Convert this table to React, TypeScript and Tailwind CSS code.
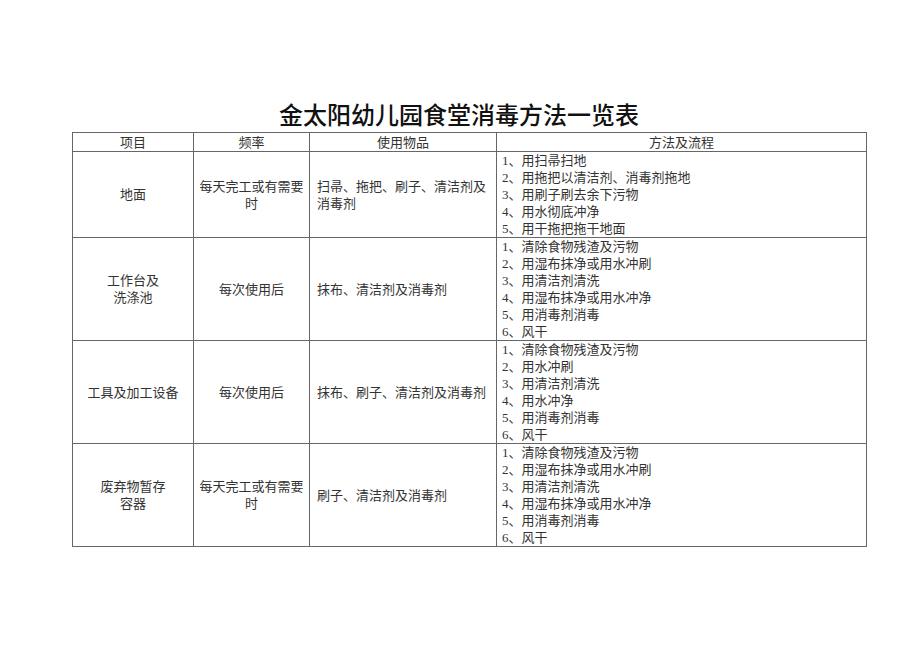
const rows = [
  {
    item: ['地面'],
    freq: '每天完工或有需要时',
    supplies: '扫帚、拖把、刷子、清洁剂及消毒剂',
    steps: ['1、用扫帚扫地', '2、用拖把以清洁剂、消毒剂拖地', '3、用刷子刷去余下污物', '4、用水彻底冲净', '5、用干拖把拖干地面'],
    height: 'h-[84px]',
  },
  {
    item: ['工作台及', '洗涤池'],
    freq: '每次使用后',
    supplies: '抹布、清洁剂及消毒剂',
    steps: ['1、清除食物残渣及污物', '2、用湿布抹净或用水冲刷', '3、用清洁剂清洗', '4、用湿布抹净或用水冲净', '5、用消毒剂消毒', '6、风干'],
    height: 'h-[103px]',
  },
  {
    item: ['工具及加工设备'],
    freq: '每次使用后',
    supplies: '抹布、刷子、清洁剂及消毒剂',
    steps: ['1、清除食物残渣及污物', '2、用水冲刷', '3、用清洁剂清洗', '4、用水冲净', '5、用消毒剂消毒', '6、风干'],
    height: 'h-[101px]',
  },
  {
    item: ['废弃物暂存', '容器'],
    freq: '每天完工或有需要时',
    supplies: '刷子、清洁剂及消毒剂',
    steps: ['1、清除食物残渣及污物', '2、用湿布抹净或用水冲刷', '3、用清洁剂清洗', '4、用湿布抹净或用水冲净', '5、用消毒剂消毒', '6、风干'],
    height: 'h-[101px]',
  },
];

const serif = "[font-family:'Liberation_Serif','Noto_Sans_CJK_SC',serif]";

export default function App() {
  return (
    <div className={`w-[920px] h-[651px] bg-white text-[#333] ${serif}`}>
      <div className="pt-[97px]">
        <h1 className="text-center text-[24px] leading-[34px] font-medium text-[#111] [font-family:'Noto_Sans_CJK_SC',sans-serif] pr-[2px]">
          金太阳幼儿园食堂消毒方法一览表
        </h1>
        <table className="ml-[72px] mt-px w-[794px] border-collapse table-fixed text-[13px] leading-[17px]">
          <colgroup>
            <col className="w-[121px]" />
            <col className="w-[116px]" />
            <col className="w-[187px]" />
            <col className="w-[370px]" />
          </colgroup>
          <thead>
            <tr className="h-[19px]">
              {['项目', '频率', '使用物品', '方法及流程'].map((h) => (
                <th key={h} className="border border-[#666] font-normal text-center p-0 align-middle">
                  {h}
                </th>
              ))}
            </tr>
          </thead>
          <tbody>
            {rows.map((r) => (
              <tr key={r.item.join('')} className={r.height}>
                <td className="border border-[#666] text-center align-middle p-0">
                  {r.item.map((l) => (
                    <div key={l}>{l}</div>
                  ))}
                </td>
                <td className="border border-[#666] text-center align-middle px-[5px] py-0">{r.freq}</td>
                <td className="border border-[#666] align-middle pl-[7px] pr-[4px] py-0">{r.supplies}</td>
                <td className="border border-[#666] align-top pl-[5px] py-0">
                  {r.steps.map((s) => (
                    <div key={s}>{s}</div>
                  ))}
                </td>
              </tr>
            ))}
          </tbody>
        </table>
      </div>
    </div>
  );
}
